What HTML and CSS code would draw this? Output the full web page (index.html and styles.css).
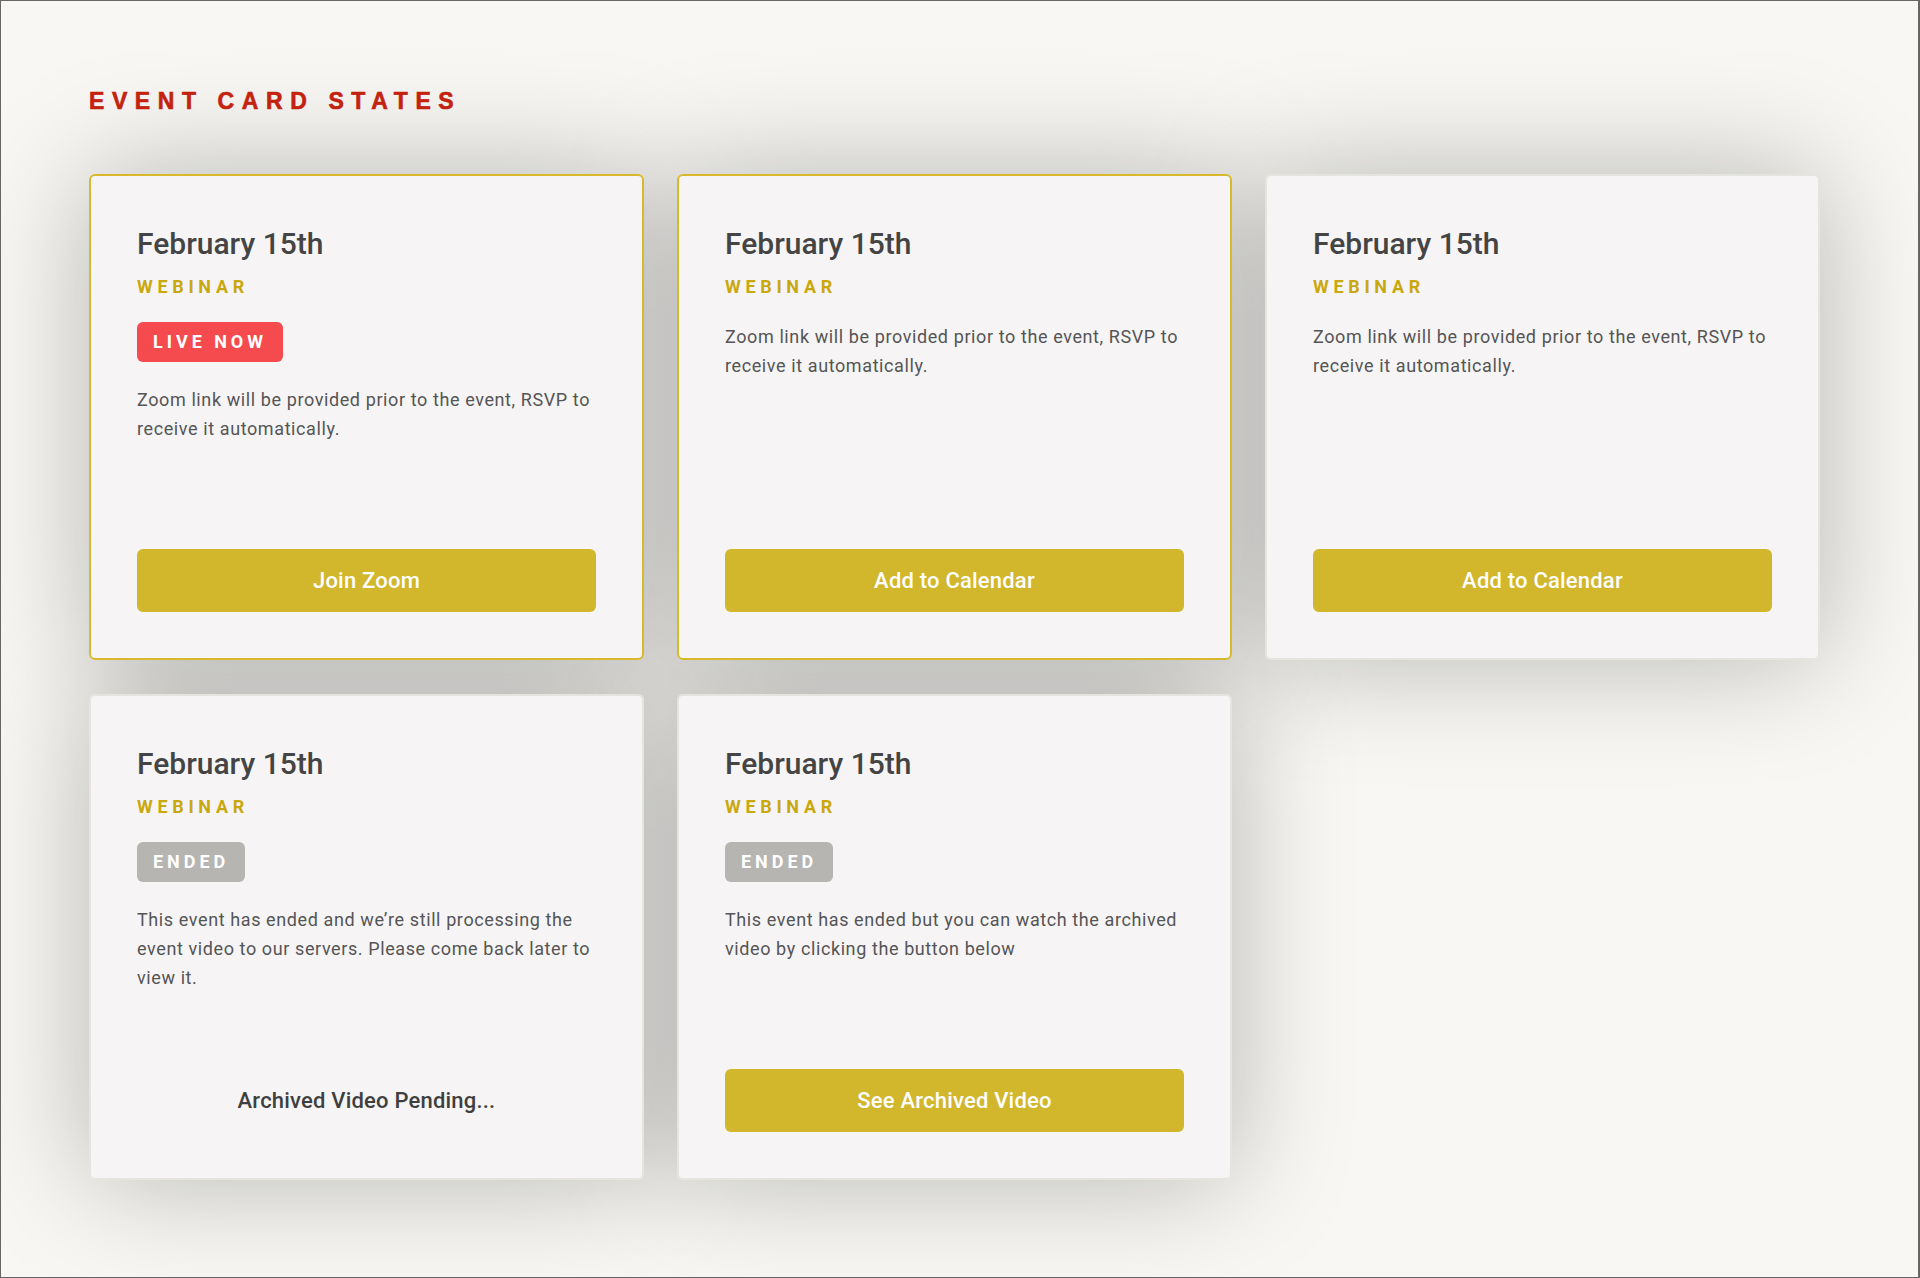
FILE: index.html
```html
<!DOCTYPE html>
<html lang="en">
<head>
  <meta charset="UTF-8">
  <meta name="viewport" content="width=device-width, initial-scale=1.0">
  <title>Event Card States</title>
  <link rel="stylesheet" href="styles.css">
</head>
<body>

  <h1 class="page-title">Event Card States</h1>

  <div class="card-grid">

    <div class="card card-live">
      <h2 class="card-date">February 15th</h2>
      <div class="card-type">Webinar</div>
      <span class="badge badge-live">Live Now</span>
      <p class="card-text">Zoom link will be provided prior to the event, RSVP to receive it automatically.</p>
      <button class="card-btn">Join Zoom</button>
    </div>

    <div class="card card-live">
      <h2 class="card-date">February 15th</h2>
      <div class="card-type">Webinar</div>
      <p class="card-text">Zoom link will be provided prior to the event, RSVP to receive it automatically.</p>
      <button class="card-btn">Add to Calendar</button>
    </div>

    <div class="card">
      <h2 class="card-date">February 15th</h2>
      <div class="card-type">Webinar</div>
      <p class="card-text">Zoom link will be provided prior to the event, RSVP to receive it automatically.</p>
      <button class="card-btn">Add to Calendar</button>
    </div>

    <div class="card">
      <h2 class="card-date">February 15th</h2>
      <div class="card-type">Webinar</div>
      <span class="badge badge-ended">Ended</span>
      <p class="card-text">This event has ended and we’re still processing the event video to our servers. Please come back later to view it.</p>
      <div class="card-pending">Archived Video Pending...</div>
    </div>

    <div class="card">
      <h2 class="card-date">February 15th</h2>
      <div class="card-type">Webinar</div>
      <span class="badge badge-ended">Ended</span>
      <p class="card-text">This event has ended but you can watch the archived video by clicking the button below</p>
      <button class="card-btn">See Archived Video</button>
    </div>

  </div>

</body>
</html>
```

FILE: styles.css
```css
* {
  box-sizing: border-box;
}

body {
  margin: 0;
  min-height: 100vh;
  padding: 85px 88px 60px;
  font-family: 'Roboto', 'Liberation Sans', sans-serif;
  background-color: #f8f7f3;
  border: 1px solid #666;
  border-right-width: 2px;
}

.page-title {
  margin: 0 0 58px;
  font-family: 'Liberation Sans', sans-serif;
  font-size: 23px;
  font-weight: 700;
  line-height: 30px;
  letter-spacing: 0.33em;
  text-transform: uppercase;
  color: #c4220f;
  -webkit-text-stroke: 0.6px #c4220f;
}

.card-grid {
  display: grid;
  grid-template-columns: repeat(3, 555px);
  column-gap: 33px;
  row-gap: 34px;
}

.card {
  position: relative;
  display: flex;
  flex-direction: column;
  align-items: flex-start;
  min-height: 486px;
  padding: 46px;
  background: #f6f4f5;
  border: 2px solid #e6e4df;
  border-radius: 6px;
}

/* shadow sits under every card so neighbours don't darken each other */
.card::before {
  content: '';
  position: absolute;
  inset: -2px;
  z-index: -1;
  border-radius: inherit;
  box-shadow: 0 0 120px rgba(0, 0, 0, 0.27);
}

.card-live {
  border-color: #d8b92e;
}

.card-date {
  margin: 4px 0 0;
  font-size: 30px;
  font-weight: 500;
  line-height: 36px;
  color: #444;
}

.card-type {
  margin-top: 13px;
  font-size: 18px;
  font-weight: 700;
  line-height: 24px;
  letter-spacing: 0.26em;
  text-transform: uppercase;
  color: #c9a80e;
}

.badge {
  margin-top: 23px;
  padding: 0 16px;
  font-size: 18px;
  font-weight: 700;
  line-height: 40px;
  letter-spacing: 0.22em;
  text-transform: uppercase;
  color: #fff;
  border-radius: 6px;
}

.badge-live {
  background-color: #f54b4e;
}

.badge-ended {
  background-color: #b6b5b1;
}

.card-text {
  margin: 23px 0 0;
  font-size: 18px;
  line-height: 29px;
  letter-spacing: 0.6px;
  color: #555;
}

.card-btn,
.card-pending {
  width: 100%;
  height: 63px;
  margin-top: auto;
  font-family: inherit;
  font-size: 22px;
  font-weight: 500;
  letter-spacing: 0.2px;
  text-align: center;
  border-radius: 6px;
}

.card-btn {
  color: #fff;
  background-color: #d2b62c;
  border: none;
  cursor: pointer;
}

.card-btn:hover {
  background-color: #c4a821;
}

.card-pending {
  line-height: 63px;
  color: #3f3f3f;
}
```
